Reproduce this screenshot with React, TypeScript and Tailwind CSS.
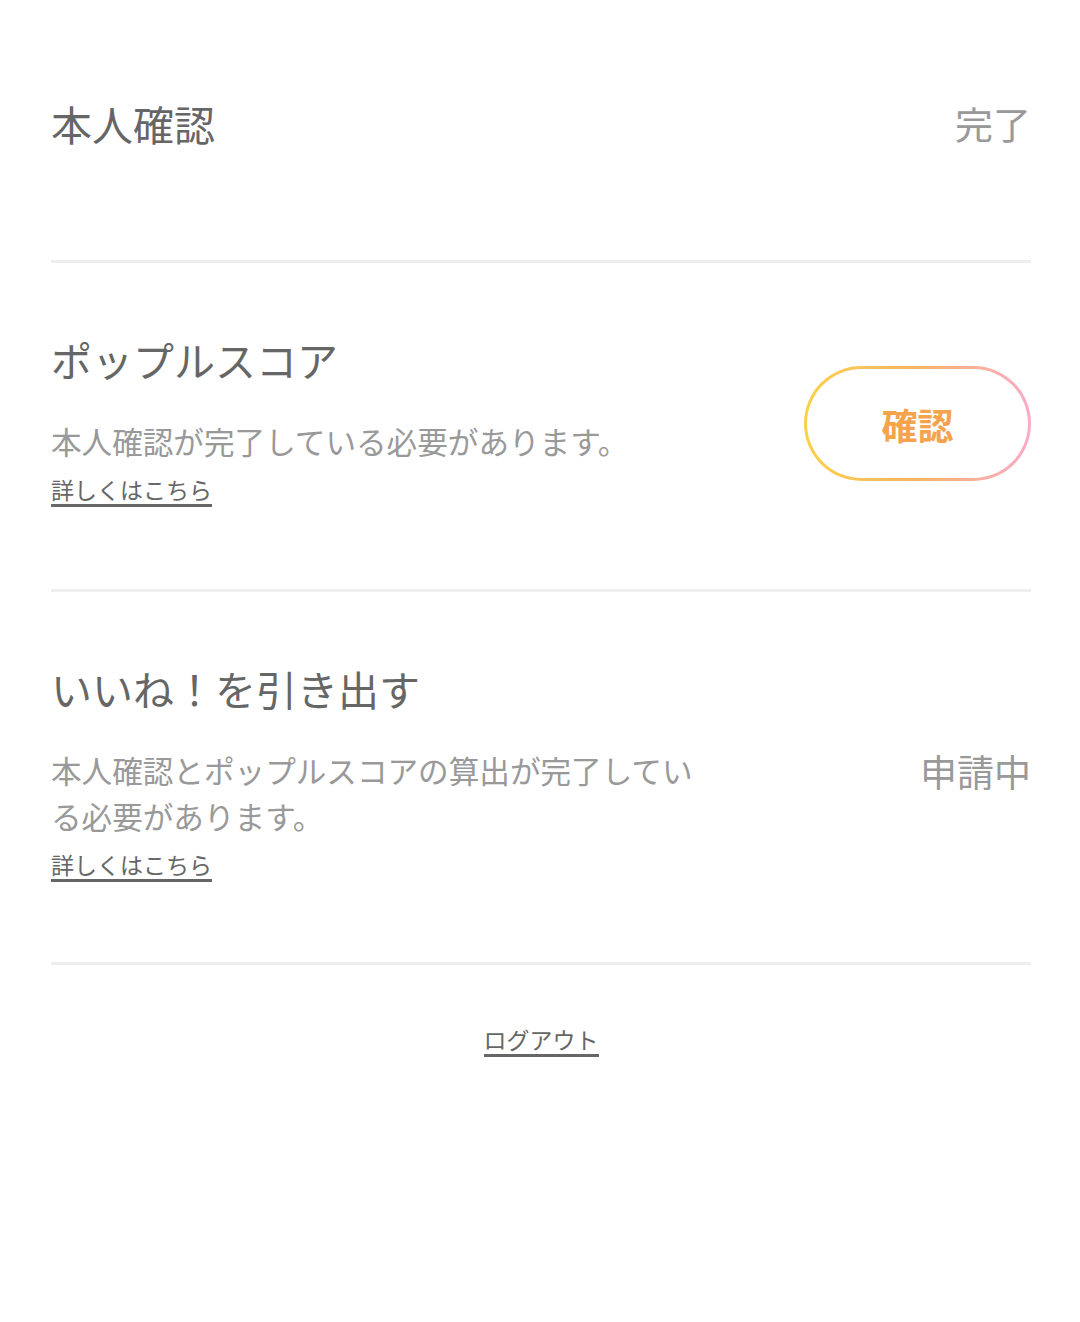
import React from "react";

const font = { fontFamily: '"Noto Sans CJK JP", "Noto Sans", sans-serif' };

function Link({ children }: { children: React.ReactNode }) {
  return (
    <a className="inline-block text-[23px] leading-[30px] text-[#666] border-b-[3px] border-[#666] cursor-pointer">
      {children}
    </a>
  );
}

export default function App() {
  return (
    <div className="w-[1080px] min-h-[1322px] bg-white" style={font}>
      <div className="ml-[51px] mr-[49px] pb-[4px]">
        {/* Section 1 */}
        <div className="flex items-center justify-between pt-[98px] pb-[112px] border-b-[3px] border-[#eeeeee]">
          <div className="text-[41px] leading-[50px] text-[#666]">本人確認</div>
          <div className="text-[38px] leading-[50px] text-[#999]">完了</div>
        </div>

        {/* Section 2 */}
        <div className="flex items-center justify-between pt-[71px] pb-[82px] border-b-[3px] border-[#eeeeee]">
          <div className="flex flex-col items-start">
            <div className="text-[41px] leading-[50px] text-[#666]">ポップルスコア</div>
            <div className="mt-[34px] text-[30.6px] leading-[46px] text-[#999]">
              本人確認が完了している必要があります。
            </div>
            <div className="mt-[10px]">
              <Link>詳しくはこちら</Link>
            </div>
          </div>
          <div className="mt-[6px] rounded-full p-[3px] bg-gradient-to-r from-[#fbd14b] via-[#f8b562] to-[#fbaac6]">
            <button className="w-[221px] h-[109px] rounded-full bg-white text-[36px] font-bold text-[#f5a34d] flex items-center justify-center">
              確認
            </button>
          </div>
        </div>

        {/* Section 3 */}
        <div className="flex items-center justify-between pt-[71px] pb-[80px] border-b-[3px] border-[#eeeeee]">
          <div className="flex flex-col items-start">
            <div className="text-[41px] leading-[50px] text-[#666]">いいね！を引き出す</div>
            <div className="mt-[34px] w-[660px] text-[30.6px] leading-[46px] text-[#999]">
              本人確認とポップルスコアの算出が完了している必要があります。
            </div>
            <div className="mt-[10px]">
              <Link>詳しくはこちら</Link>
            </div>
          </div>
          <div className="text-[37px] leading-[50px] text-[#999] self-start mt-[83px]">申請中</div>
        </div>

        {/* Logout */}
        <div className="flex justify-center pt-[59px]">
          <Link>ログアウト</Link>
        </div>
      </div>
    </div>
  );
}
